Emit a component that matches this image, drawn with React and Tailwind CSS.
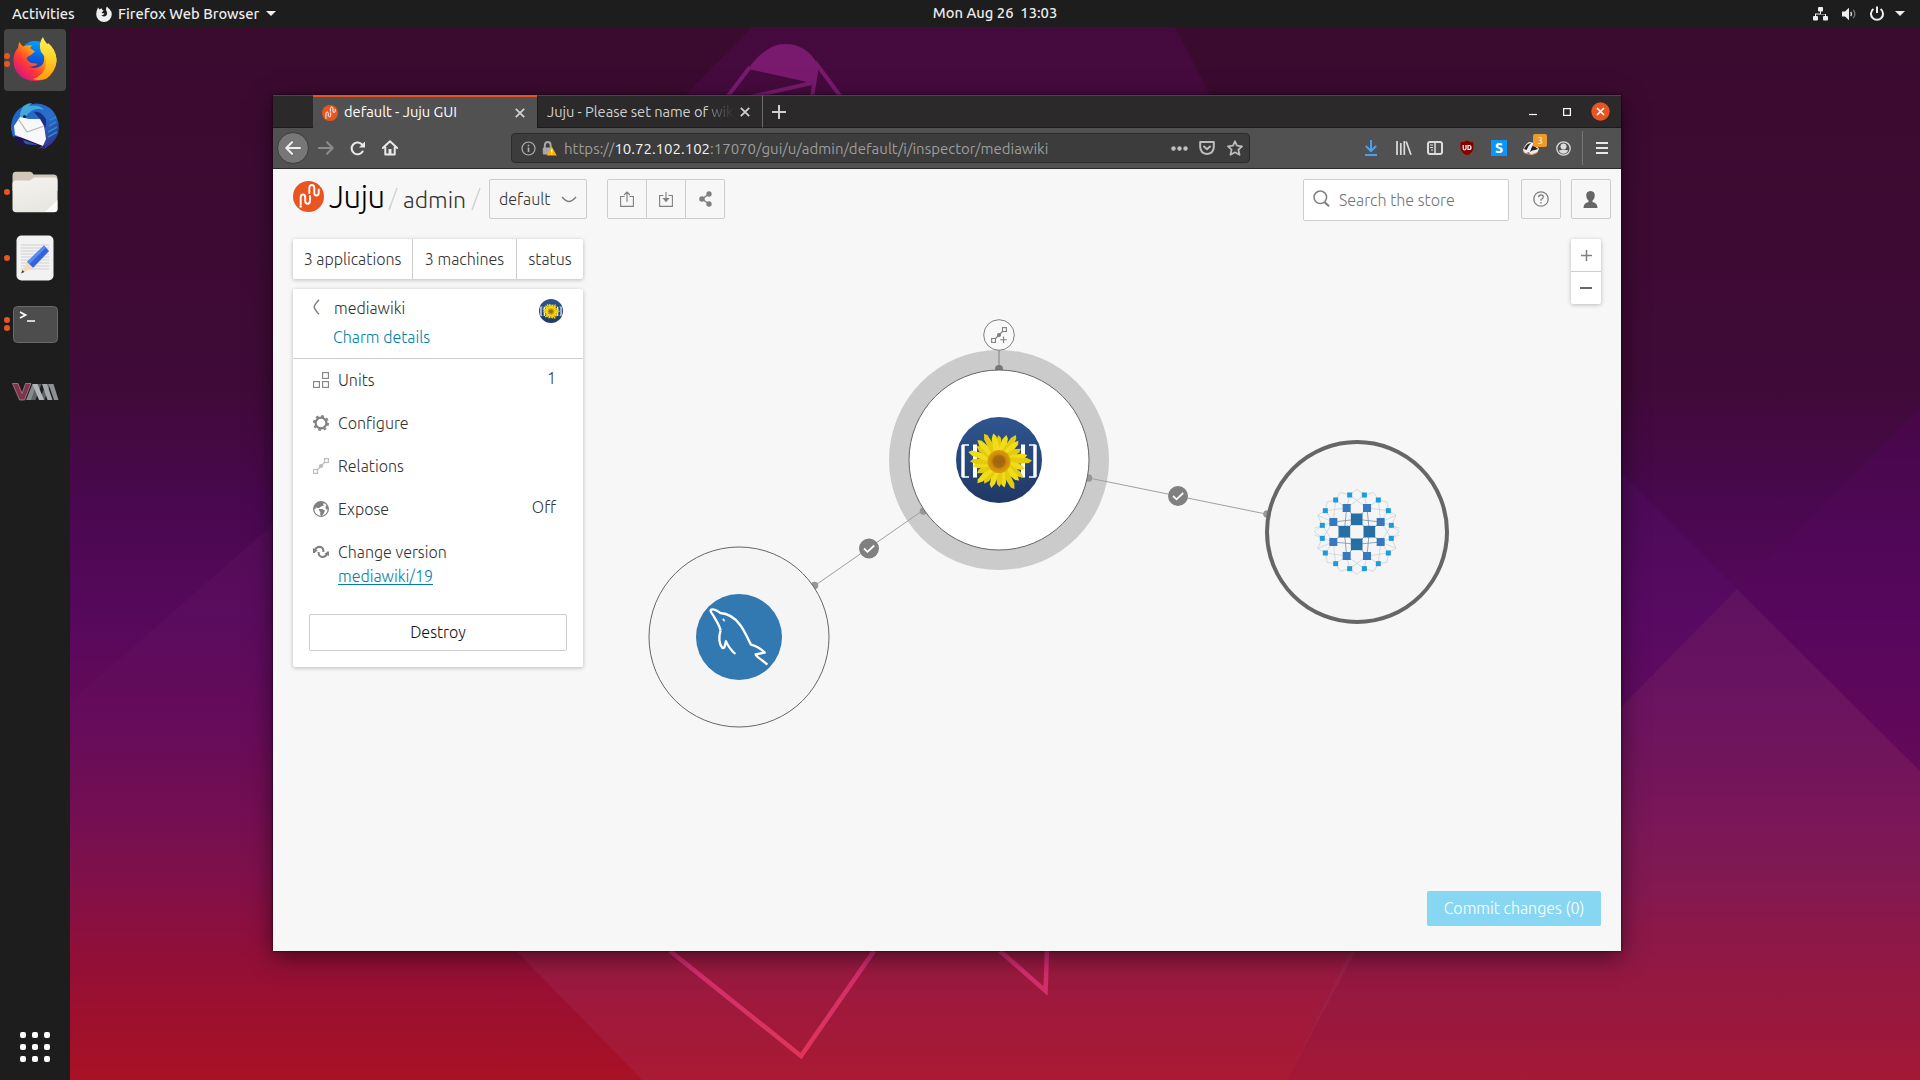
import React from "react";

/* ---------- wallpaper ---------- */
function Wallpaper() {
  return (
    <svg className="absolute inset-0" width="1920" height="1080" viewBox="0 0 1920 1080">
      <defs>
        <linearGradient id="sky" x1="0" y1="0" x2="0" y2="1">
          <stop offset="0" stopColor="#3b0a2e" />
          <stop offset="0.36" stopColor="#3f0a38" />
          <stop offset="0.47" stopColor="#4a0850" />
          <stop offset="0.57" stopColor="#57085c" />
          <stop offset="0.68" stopColor="#670a58" />
          <stop offset="0.8" stopColor="#7d104c" />
          <stop offset="0.9" stopColor="#950f35" />
          <stop offset="1" stopColor="#a91125" />
        </linearGradient>
        <linearGradient id="pink" x1="0" y1="951" x2="0" y2="1060" gradientUnits="userSpaceOnUse">
          <stop offset="0" stopColor="#cf2b72" />
          <stop offset="1" stopColor="#e0365a" />
        </linearGradient>
        <linearGradient id="facet" x1="0" y1="525" x2="0" y2="900" gradientUnits="userSpaceOnUse">
          <stop offset="0" stopColor="#6a1a66" stopOpacity=".25" />
          <stop offset="1" stopColor="#6a1a66" stopOpacity="0" />
        </linearGradient>
      </defs>
      <rect width="1920" height="1080" fill="url(#sky)" />
      <path d="M752 27H1175L1420 500H300L685 95Z" fill="#5a0c58" opacity=".35" />
      <path d="M1920 408L1737 589L1920 771Z" fill="#56055f" opacity=".35" />
      <path d="M1648 500L1737 589L1621 707V473Z" fill="#5a1070" opacity=".3" />
      <path d="M1737 589L1920 771V1080H1287L1400 850L1621 707Z" fill="#8a3a7a" opacity=".2" />
      <path d="M70 702L273 525V951H70Z" fill="url(#facet)" />
      <path d="M490 924L642 1080H1287L1370 924Z" fill="#b04070" opacity=".2" />
      <g fill="none" stroke="url(#pink)" strokeWidth="4.5" strokeLinejoin="miter">
        <path d="M670 951L801 1056L874 951" />
        <path d="M1000 951L1045.500 991L1047 951" />
      </g>
      <path d="M748 69Q766 44 785 44Q807 44 818 65L812 83Z" fill="#791a6e" />
      <g fill="none" stroke="#791a6e" strokeWidth="4">
        <path d="M728 96L750 67" />
        <path d="M750 97L812 83" />
        <path d="M812 97L817 66" />
        <path d="M815 62L841 97" />
      </g>
    </svg>
  );
}

/* ---------- desktop panel ---------- */
function Caret() {
  return (
    <svg width="10" height="5" viewBox="0 0 10 5">
      <path d="M0 0H10L5 5Z" fill="#eee" />
    </svg>
  );
}

function TopBar() {
  return (
    <header className="relative flex h-[27px] shrink-0 items-center bg-[#1d1d1d] pr-[15px] pl-3 font-['Ubuntu','Noto_Sans',sans-serif] text-[14.75px] leading-none font-medium text-[#ececec]">
      <span className="w-[84px] pt-[2px] whitespace-nowrap">Activities</span>
      <svg className="mr-[6px]" width="16" height="16" viewBox="0 0 16 16">
        <path d="M2 1.500L3.500 3.400Q5 2.200 6 2.600Q5.500 4 7.600 4.600Q6.600 6 5.600 6.600Q6 7.600 7.600 7.200Q8.800 7.200 8.300 8Q7 9.600 5.200 9Q6.600 11 9 10.300Q11.500 9.200 11 6.200Q9 3 11 0.400Q12 2 13.500 3Q15.800 5.500 15.800 8.300A7.800 7.600 0 0 1 .2 8.300Q.2 5 2 1.500Z" fill="#eee" />
      </svg>
      <span className="mr-[6px] w-[142px] pt-[2px] whitespace-nowrap">Firefox Web Browser</span>
      <Caret />
      <div className="absolute inset-x-0 flex justify-center pl-[70px]">
        <span className="whitespace-pre">Mon Aug 26  13:03</span>
      </div>
      <div className="ml-auto flex items-center">
        <svg className="mr-[14px]" width="15" height="14" viewBox="0 0 15 14" fill="#eee">
          <rect x="5" y="0" width="5" height="4.500" rx="1" />
          <rect x="0" y="9" width="5" height="4.500" rx="1" />
          <rect x="10" y="9" width="5" height="4.500" rx="1" />
          <path d="M7 4h1v3h5v2h-1V7.500H3V9H2V6.500h5z" />
        </svg>
        <svg className="mr-[13px]" width="15" height="14" viewBox="0 0 15 14">
          <path d="M0 4.500H3L7 .8V13.200L3 9.500H0Z" fill="#eee" />
          <path d="M8.800 4.800Q10.300 7 8.800 9.200" stroke="#ddd" strokeWidth="1.500" fill="none" />
          <path d="M11.300 2.800Q14.500 7 11.300 11.200" stroke="#777" strokeWidth="1.300" fill="none" />
        </svg>
        <svg className="mr-[11px]" width="14" height="15" viewBox="0 0 14 15" fill="none" stroke="#eee" strokeWidth="2">
          <path d="M3.400 3A6 6 0 1 0 10.600 3" />
          <path d="M7 0.500V7" />
        </svg>
        <Caret />
      </div>
    </header>
  );
}

function FirefoxIcon() {
  return (
    <svg width="46" height="46" viewBox="0 0 46 46">
      <defs>
        <linearGradient id="fxBody" x1=".9" y1=".1" x2=".1" y2=".9">
          <stop offset="0" stopColor="#fff44f" />
          <stop offset=".35" stopColor="#ffa40f" />
          <stop offset=".65" stopColor="#ff3b35" />
          <stop offset="1" stopColor="#d4108a" />
        </linearGradient>
        <linearGradient id="fxTail" x1="0" y1="0" x2="0" y2="1">
          <stop offset="0" stopColor="#fff14f" />
          <stop offset=".5" stopColor="#ffd02a" />
          <stop offset="1" stopColor="#ff9a0a" />
        </linearGradient>
        <linearGradient id="fxGlobe" x1=".6" y1="0" x2=".4" y2="1">
          <stop offset="0" stopColor="#00a2ff" />
          <stop offset=".5" stopColor="#0a62e0" />
          <stop offset="1" stopColor="#312a98" />
        </linearGradient>
      </defs>
      <circle cx="23" cy="20" r="16" fill="url(#fxGlobe)" />
      <path d="M7 5L11 9.500Q16 7.500 20 8.500L18 11L23 14.500L19 18Q14 20 15 22Q16 25 20 26L26 27Q20 31 16 29Q22 33 29 29Q34 25 31 15L36 6Q44 12 44.500 23Q44 36 33 42Q23 46 13 42Q1 36 1.500 22Q2 15 6 11Z" fill="url(#fxBody)" />
      <path d="M31 0Q33 6 39 10Q45 17 44.500 25Q42 36 34 42Q25 44 21 42Q33 38 34 26Q34 20 29 15Q26 6 31 0Z" fill="url(#fxTail)" />
    </svg>
  );
}

function ThunderbirdIcon() {
  return (
    <svg className="mt-[2px]" width="50" height="50" viewBox="0 0 50 50">
      <defs>
        <linearGradient id="tb" x1=".1" y1=".1" x2=".8" y2="1">
          <stop offset="0" stopColor="#1d63c4" />
          <stop offset=".5" stopColor="#2a6fca" />
          <stop offset="1" stopColor="#342c87" />
        </linearGradient>
      </defs>
      <path d="M1 27Q1 10 14 4Q32 -3 43 9Q51 20 48 32Q43 44 31 48L35 45L28 47L34 42Q16 46 3 35Z" fill="url(#tb)" />
      <path d="M3 34L12 47L11 42L17 45L13 38L35 45L30 38Z" fill="#211449" />
      <path d="M10 12Q12 1 22 1L19 4Q30 2 34 8Q22 4 15 16L10 21Z" fill="#41a7dd" />
      <path d="M24 10Q30 8 36 17Q37 22 35 27L30 17Z" fill="#1c2f86" />
      <path d="M40 18L46 15M39 24L46 20M38 30L47 25M38 35L47 30" stroke="#1f8fd0" strokeWidth="1.600" />
      <path d="M10 15L4 24L5 33L33 44L36 37L34 24L30 17H19Z" fill="#f8f8fa" />
      <path d="M9 18L17 30L34 24" fill="none" stroke="#b8b8bb" strokeWidth="1.200" />
      <circle cx="14.500" cy="14.500" r="1.600" fill="#10204a" />
    </svg>
  );
}

function FolderIcon() {
  return (
    <svg width="46" height="42" viewBox="0 0 46 42">
      <defs>
        <linearGradient id="fold" x1="0" y1="0" x2=".3" y2="1">
          <stop offset="0" stopColor="#f4f3ef" />
          <stop offset="1" stopColor="#e9e7e1" />
        </linearGradient>
      </defs>
      <path d="M.5 5Q.5 .8 4 .8H18Q20.500 1 21.500 3.500H42Q45.500 3.800 45.500 8V20H.5Z" fill="#cfc8b8" />
      <path d="M.5 13Q.5 9.500 4 9.500H18L22 6.500H42Q45.500 6.500 45.500 10V38Q45.500 41.200 42 41.200H4Q.5 41 .5 38Z" fill="url(#fold)" />
      <path d="M45.500 29V38Q45.500 41 42 41H33Z" fill="#fff" opacity=".8" />
    </svg>
  );
}

function WriterIcon() {
  return (
    <svg width="38" height="46" viewBox="0 0 38 46">
      <rect x=".5" y=".5" width="37" height="45" rx="5" fill="#f2f2f2" />
      <path d="M5 10H33M5 13H33M5 16H33M5 19H33M5 22H33M5 25H33M5 28H33M5 31H33M5 34H33" stroke="#d0d0d0" strokeWidth="1" />
      <path d="M28 10.500L33 16L17 33L11 27Z" fill="#3264dc" />
      <path d="M28 10.500L30 12.500L13 29.500L11 27Z" fill="#5c8af2" />
      <path d="M11 27L17 33L6 38Z" fill="#f8d9b8" />
      <path d="M6.500 35L8.500 37L5 38.500Z" fill="#444" />
    </svg>
  );
}

function TerminalIcon() {
  return (
    <svg width="45" height="37" viewBox="0 0 45 37">
      <rect x=".5" y=".5" width="44" height="36" rx="4" fill="#4d4d4d" stroke="#6a6a6a" />
      <path d="M7 6L12.500 9L7 12" fill="none" stroke="#fff" strokeWidth="1.800" />
      <path d="M14 15H22" stroke="#fff" strokeWidth="1.500" />
    </svg>
  );
}

function VmmIcon() {
  return (
    <svg className="mt-1" width="47" height="18" viewBox="0 0 46 18">
      <path d="M0 .5H5.500L9.500 10.500L13 .5H18.500L12 17H7Z" fill="#80334a" stroke="#b9a9ae" strokeWidth=".6" />
      <path d="M18 17L24.500 1H29L23 17ZM27 17L33.500 1H38L32 17Z" fill="#5e6367" />
      <path d="M13.500 17L20 1H24.500L18.500 17Z" fill="#868b8f" />
      <path d="M20 1H25L31.500 17H26.500Z" fill="#b3b7b9" />
      <path d="M29.500 1H34.500L40 17H35Z" fill="#a5a9ac" />
      <path d="M36 1H41L46 17H41.500Z" fill="#8c9194" />
    </svg>
  );
}

function DockItem({ dots = 0, active = false, children }) {
  return (
    <div className={"relative flex h-[62px] w-[62px] items-center justify-center rounded-[4px] " + (active ? "bg-[#464646]" : "")}>
      <div className="absolute inset-y-0 left-0 flex flex-col justify-center gap-[2px]">
        {Array.from({ length: dots }, (_, i) => (
          <span key={i} className="h-[6px] w-[6px] rounded-full bg-[#e95420]" />
        ))}
      </div>
      {children}
    </div>
  );
}

function Dock() {
  return (
    <nav className="relative flex w-[70px] flex-col items-center gap-1 bg-[#1d1d1d] pt-[2px]">
      <DockItem dots={2} active><FirefoxIcon /></DockItem>
      <DockItem><ThunderbirdIcon /></DockItem>
      <DockItem dots={1}><FolderIcon /></DockItem>
      <DockItem dots={1}><WriterIcon /></DockItem>
      <DockItem dots={2}><TerminalIcon /></DockItem>
      <DockItem><VmmIcon /></DockItem>
      <div className="mt-auto mb-[18px] grid grid-cols-3 gap-[6px]">
        {Array.from({ length: 9 }, (_, i) => (
          <span key={i} className="h-[6px] w-[6px] rounded-[2px] bg-white" />
        ))}
      </div>
    </nav>
  );
}

/* ---------- Juju marks ---------- */
function JujuMark({ size }) {
  return (
    <svg width={size} height={size} viewBox="0 0 31 31">
      <circle cx="15.500" cy="15.500" r="15.500" fill="#e95420" />
      <g fill="none" stroke="#fff" strokeWidth="1.900" strokeLinecap="round">
        <path d="M7.700 23.500V16.500Q7.700 13.500 9.900 13.500Q12.200 13.500 12.200 16.500V20Q12.200 22.700 14.700 22.700Q17 22.700 17 20V15" />
        <path d="M16.300 12V7Q16.300 4 18.800 4Q21.300 4 21.300 7V12Q21.300 14.500 23.500 14.500Q25.700 14.500 25.700 12V8.500" />
      </g>
      <circle cx="7.700" cy="25.500" r="1.200" fill="#fff" />
    </svg>
  );
}

function CloseX() {
  return (
    <svg className="shrink-0" width="10" height="10" viewBox="0 0 10 10" stroke="#cfcfcf" strokeWidth="1.800">
      <path d="M.8 .8L9.200 9.200M9.200 .8L.8 9.200" />
    </svg>
  );
}

/* ---------- browser chrome ---------- */
function TabStrip() {
  return (
    <div className="flex h-[33px] shrink-0 rounded-t-[4px] bg-[#2b292a] text-[14.67px] leading-[20px] text-[#e6e6e6]">
      <div className="w-[40px] border-t border-b border-t-[#474546] border-b-[#1b1b1b]" />
      <div className="flex w-[224px] items-center border-t-2 border-[#e95420] bg-[#515151] pr-[12px] pl-[9px]">
        <JujuMark size={16} />
        <span className="ml-[6px] grow pb-[2px] whitespace-nowrap text-white">default - Juju GUI</span>
        <CloseX />
      </div>
      <div className="flex w-[226px] items-center border-t border-r border-b border-l border-t-[#474546] border-r-[#6a6a6a] border-b-[#1b1b1b] border-l-[#1b1b1b] pr-[12px] pl-[9px] text-[#cfcfcf]">
        <span className="w-[193px] shrink-0 whitespace-nowrap tracking-[-0.05px]">
          Juju - Please set name of <span className="bg-gradient-to-r from-[#888] to-[#333] bg-clip-text text-transparent">wik</span>
        </span>
        <CloseX />
      </div>
      <div className="flex grow items-center border-t border-b border-t-[#474546] border-b-[#1b1b1b] pr-[11px] pl-[9px]">
        <svg width="14" height="14" viewBox="0 0 14 14" stroke="#d0d0d0" strokeWidth="2">
          <path d="M7 0V14M0 7H14" />
        </svg>
        <div className="ml-auto flex items-center">
          <svg className="mt-px mr-[26px]" width="8" height="8" viewBox="0 0 8 8"><path d="M0 6.500H8" stroke="#fff" strokeWidth="1.200" /></svg>
          <svg className="mr-[20px]" width="8" height="8" viewBox="0 0 8 8"><rect x=".6" y=".6" width="6.800" height="6.800" fill="none" stroke="#fff" strokeWidth="1.200" /></svg>
          <svg width="19" height="19" viewBox="0 0 19 19">
            <circle cx="9.500" cy="9.500" r="9.200" fill="#e95420" />
            <path d="M6 6L13 13M13 6L6 13" stroke="#fff" strokeWidth="1.600" />
          </svg>
        </div>
      </div>
    </div>
  );
}

function UrlBar() {
  return (
    <div className="ml-[113px] flex h-[30px] w-[739px] items-center rounded-[4px] border border-[#2b2b2b] bg-[#3c3c3c] pr-[6px] pl-[9px] text-[15px] leading-[20px] text-[#9d9d9d]">
      <svg className="mr-[6px]" width="15" height="15" viewBox="0 0 15 15" fill="none" stroke="#b0b0b0">
        <circle cx="7.500" cy="7.500" r="6.500" strokeWidth="1.200" />
        <path d="M7.500 6.500V11M7.500 3.800V5.300" strokeWidth="1.600" />
      </svg>
      <svg className="mr-[7px]" width="15" height="15" viewBox="0 0 15 15">
        <path d="M2.800 8V4.500Q2.800 1 5.800 1Q8.700 1 8.700 4.500V7" fill="none" stroke="#a8a8a8" strokeWidth="1.900" />
        <rect x=".8" y="6.500" width="9.500" height="7" rx="1" fill="#a8a8a8" />
        <path d="M9.700 5.500L14.800 14.500H4.700Z" fill="#ffb000" />
        <path d="M9.700 8.300V11.500M9.700 12.400V13.600" stroke="#fff" strokeWidth="1.300" />
      </svg>
      <span className="mt-px grow whitespace-nowrap">https://<span className="text-[#f4f4f4]">10.72.102.102</span>:17070/gui/u/admin/default/i/inspector/mediawiki</span>
      <svg className="mr-[11px]" width="17" height="5" viewBox="0 0 17 5" fill="#c0c0c0">
        <circle cx="2.500" cy="2.500" r="2.200" /><circle cx="8.500" cy="2.500" r="2.200" /><circle cx="14.500" cy="2.500" r="2.200" />
      </svg>
      <svg className="mr-[12px]" width="16" height="14" viewBox="0 0 16 14" fill="none" stroke="#bdbdbd" strokeWidth="2" strokeLinejoin="round" strokeLinecap="round">
        <path d="M1.200 1H14.800V6Q14.500 12.500 8 13Q1.500 12.500 1.200 6Z" /><path d="M5 5.500L8 8.300L11 5.500" />
      </svg>
      <svg width="16" height="16" viewBox="0 0 16 16" fill="none" stroke="#bdbdbd" strokeWidth="1.800" strokeLinejoin="round">
        <path d="M8 1.300L10 5.700L15 6.300L11.400 9.600L12.500 14.800L8 12.300L3.500 14.800L4.600 9.600L1 6.300L6 5.700Z" />
      </svg>
    </div>
  );
}

function NavBar() {
  return (
    <div className="flex h-[41px] shrink-0 items-center border-b border-[#2a2a2a] bg-[#515151] pl-1">
      <div className="flex h-8 w-8 items-center justify-center rounded-full border border-[#3b3b3b] bg-[#777]">
        <svg width="16" height="14" viewBox="0 0 16 14" fill="none" stroke="#f0f0f0" strokeWidth="2" strokeLinecap="round" strokeLinejoin="round"><path d="M15 7H1.500M7 1.200L1.300 7L7 12.800" /></svg>
      </div>
      <svg className="ml-[9px]" width="16" height="14" viewBox="0 0 16 14" fill="none" stroke="#8c8c8c" strokeWidth="2" strokeLinecap="round" strokeLinejoin="round"><path d="M1 7H14.500M9 1.200L14.700 7L9 12.800" /></svg>
      <svg className="ml-[16px]" width="16" height="15" viewBox="0 0 16 15" fill="none" stroke="#e8e8e8" strokeWidth="2.100" strokeLinecap="round"><path d="M12.600 10.500A5.900 5.900 0 1 1 11.500 3L13 4.500" /><path d="M15 .5V6.500H9Z" fill="#e8e8e8" stroke="none" /></svg>
      <svg className="ml-[16px]" width="16" height="16" viewBox="0 0 16 16"><path d="M.8 8L8 1.200L15.200 8M3.300 7.500V14.500H12.700V7.500" fill="none" stroke="#e8e8e8" strokeWidth="2" strokeLinejoin="round" strokeLinecap="round" /><rect x="6.500" y="9" width="3" height="6" fill="#e8e8e8" /></svg>
      <UrlBar />
      <div className="ml-auto flex items-center">
        <svg className="mr-[18px]" width="14" height="16" viewBox="0 0 14 16" fill="none" stroke="#4a9ff5" strokeWidth="2"><path d="M7 0V11M1.800 6L7 11L12.200 6M1 15H13" /></svg>
        <svg className="mr-[15px]" width="16" height="14" viewBox="0 0 16 14" stroke="#dcdcdc" strokeWidth="1.700"><path d="M1 0V14M4.800 2V14M8.300 0V14M10.200 .5L15 13.700" /></svg>
        <svg className="mr-[17px]" width="16" height="14" viewBox="0 0 16 14" fill="none" stroke="#dcdcdc"><rect x="1" y="1" width="14" height="12" rx="2" strokeWidth="2" /><path d="M8 1V13" strokeWidth="1.500" /><path d="M3 4H6M3 6.500H6M4 9H6" strokeWidth="1" /></svg>
        <svg className="mr-[17px]" width="14" height="16" viewBox="0 0 14 16"><path d="M7 0Q10 2 13.800 2V8Q13.500 13 7 15.800Q.5 13 .2 8V2Q4 2 7 0Z" fill="#800000" stroke="#9c4848" strokeWidth=".5" /><path d="M3.200 5V8.500Q3.200 10 4.600 10Q6 10 6 8.500V5M8 5.500H9Q11 5.500 11 7.500Q11 9.500 9 9.500H8Z" fill="none" stroke="#fff" strokeWidth="1.200" /></svg>
        <span className="mr-[16px] flex h-4 w-4 items-center justify-center bg-[#0996f8] text-[14px] leading-none font-black text-white">S</span>
        <div className="relative mr-[17px] h-4 w-4">
          <svg width="16" height="16" viewBox="0 0 16 16"><path d="M0 10Q2 4 6 2Q13 2 16 9L14 13L9 15L1 13Z" fill="#eee" /><path d="M1 9Q4 3 8 3Q5 6 3.500 10ZM10 5L15 9L12 10Q9 10 7 12Q8 8 10 5ZM4 12L7 13L6 14Z" fill="#222" /><path d="M0 11L3 13.500L9 14.500L14 12.500" fill="none" stroke="#d9854a" strokeWidth=".8" /></svg>
          <span className="absolute -top-[6px] left-[10px] flex h-[13px] w-[14px] items-center justify-center rounded-[2px] bg-[#ee9a2a] text-[10px] leading-none text-white">3</span>
        </div>
        <svg width="15" height="15" viewBox="0 0 15 15"><circle cx="7.500" cy="7.500" r="6.700" fill="none" stroke="#dcdcdc" strokeWidth="1.300" /><circle cx="7.500" cy="5.500" r="3" fill="#dcdcdc" /><path d="M2.800 9.500Q7.500 8 12.200 9.500Q10.500 12.800 7.500 12.800Q4.500 12.800 2.800 9.500Z" fill="#dcdcdc" /></svg>
        <div className="mr-[13px] ml-[11px] h-[34px] w-px bg-[#757575]" />
        <svg className="mr-[13px]" width="12" height="12" viewBox="0 0 12 12" stroke="#e8e8e8" strokeWidth="2"><path d="M0 1H12M0 6H12M0 11H12" /></svg>
      </div>
    </div>
  );
}

/* ---------- Juju GUI ---------- */
function Slash() {
  return (
    <svg width="10" height="24" viewBox="0 0 10 24"><path d="M9 1L1 23" stroke="#d2d2d2" strokeWidth="1.500" /></svg>
  );
}

function GuiHeader() {
  return (
    <div className="flex h-[52px] items-start pt-[10px] pr-[10px] pl-5">
      <div className="mt-[2px]"><JujuMark size={31} /></div>
      <span className="mt-[2px] ml-[5px] w-[57px] text-[31px] leading-[32px] font-light tracking-[-0.4px] text-black">Juju</span>
      <div className="mt-2 ml-[2px]"><Slash /></div>
      <span className="mt-[7px] ml-[5px] w-[68px] text-[23px] leading-[28px] font-light">admin</span>
      <div className="mt-2"><Slash /></div>
      <button className="ml-2 flex h-10 w-[98px] items-center justify-between rounded-[2px] border border-[#cdcdcd] pr-[9px] pl-[9px] font-light">
        default
        <svg width="16" height="7" viewBox="0 0 16 7"><path d="M1 1Q5 5.500 8 5.500Q11 5.500 15 1" fill="none" stroke="#7d7d7d" strokeWidth="1.400" /></svg>
      </button>
      <div className="ml-5 flex h-10 w-[118px] divide-x divide-[#cdcdcd] rounded-[2px] border border-[#cdcdcd]">
        <div className="flex flex-1 items-center justify-center">
          <svg width="14" height="16" viewBox="0 0 14 16" fill="none" stroke="#808080" strokeWidth="1.100"><path d="M4.500 5.500H.6V15.400H13.400V5.500H9.500M7 11V1M4 4L7 1L10 4" /></svg>
        </div>
        <div className="flex flex-1 items-center justify-center">
          <svg width="14" height="16" viewBox="0 0 14 16" fill="none" stroke="#808080" strokeWidth="1.100"><path d="M4.500 4.500H.6V15.400H13.400V4.500H9.500M7 1V10" /><path d="M4.500 7.500L7 10.500L9.500 7.500Z" fill="#808080" /></svg>
        </div>
        <div className="flex flex-1 items-center justify-center">
          <svg width="13" height="16" viewBox="0 0 13 16" fill="#808080"><circle cx="3" cy="8" r="2.800" /><circle cx="10" cy="3" r="2.700" /><circle cx="10" cy="13" r="2.700" /><path d="M10 3L3 8L10 13" fill="none" stroke="#808080" strokeWidth="1.500" /></svg>
        </div>
      </div>
      <div className="ml-auto flex h-[42px] w-[206px] items-center rounded-[2px] border border-[#cdcdcd] bg-white pl-[9px] font-light text-[#757575]">
        <svg className="mr-[9px] -mt-1" width="17" height="17" viewBox="0 0 17 17" fill="none" stroke="#808080" strokeWidth="1.500"><circle cx="7.300" cy="7.300" r="6.300" /><path d="M11.500 12L16 16.300" strokeWidth="2" /></svg>
        <span>Search the store</span>
      </div>
      <div className="ml-3 flex h-10 w-10 items-center justify-center rounded-[2px] border border-[#cdcdcd]">
        <svg width="16" height="16" viewBox="0 0 16 16" fill="none" stroke="#808080" strokeWidth="1.300"><circle cx="8" cy="8" r="7.200" /><path d="M5.700 6.200Q5.700 4 8 4Q10.300 4 10.300 6Q10.300 7.500 8 8.500V9.700M8 11V12.500" /></svg>
      </div>
      <div className="ml-[10px] flex h-10 w-10 items-center justify-center rounded-[2px] border border-[#cdcdcd]">
        <svg width="16" height="17" viewBox="0 0 16 17" fill="#666"><path d="M7.500 0Q12 .2 11.800 5Q11.500 8 9.500 9.500V11Q14.500 12 14.500 17H.5Q.5 12 5.500 11V9.500Q3.500 8 3.200 5Q3 .2 7.500 0Z" /></svg>
      </div>
    </div>
  );
}

const rows = [
  {
    label: "Units",
    value: "1",
    right: "pr-[27px]",
    icon: <g fill="none" stroke="#808080" strokeWidth="1.100"><rect x="9.600" y=".6" width="5.800" height="5.800" /><rect x=".6" y="9.600" width="5.800" height="5.800" /><rect x="9.600" y="9.600" width="5.800" height="5.800" /></g>,
  },
  {
    label: "Configure",
    right: "pr-7",
    icon: <g fill="none" stroke="#808080"><circle cx="8" cy="8" r="5.400" strokeWidth="2.200" /><circle cx="8" cy="8" r="7.100" strokeWidth="1.800" strokeDasharray="2.800 2.777" /></g>,
  },
  {
    label: "Relations",
    right: "pr-7",
    icon: <g fill="none" stroke="#b8bdbd" strokeWidth="1.200"><rect x=".6" y="11.500" width="3.900" height="3.900" /><rect x="11.500" y=".6" width="3.900" height="3.900" /><path d="M4.500 11.500L11.500 4.500" /><circle cx="8" cy="8" r="1.500" fill="#b8bdbd" /></g>,
  },
  {
    label: "Expose",
    value: "Off",
    right: "pr-[27px]",
    icon: <g><circle cx="8" cy="8" r="7.300" fill="#fff" stroke="#808080" strokeWidth="1.300" /><path d="M1 6Q2 2 7 .8L12 1.500L10 3L11 4.500L8 5.500L6 7H4L3 6L2.500 8L.8 8ZM6 8H9L12 9.500L11 12L8.500 15.500L7 13L7.500 11L6 9.500ZM13 4L15.300 7L14 9L12.500 7Z" fill="#808080" /></g>,
  },
];

function InspectorRow({ row }) {
  return (
    <div className={"flex h-[43px] items-center pl-5 " + row.right}>
      <svg className="mt-px mr-[9px]" width="16" height="16" viewBox="0 0 16 16">{row.icon}</svg>
      <span className="grow">{row.label}</span>
      {row.value && <span className="-mt-[3px]">{row.value}</span>}
    </div>
  );
}

function Inspector() {
  return (
    <div className="mt-[10px] h-[378px] w-[290px] rounded-[2px] bg-white shadow-[0_1px_4px_rgba(0,0,0,0.25)]">
      <div className="flex h-[70px] border-b border-[#cdcdcd] pt-[7px] pr-5 pl-5">
        <svg className="mt-[3px]" width="7" height="16" viewBox="0 0 7 16"><path d="M6 .7Q1.200 6 1.200 8Q1.200 10 6 15.300" fill="none" stroke="#808080" strokeWidth="1.500" /></svg>
        <div className="ml-[14px] grow">
          <div className="leading-[24px]">mediawiki</div>
          <div className="mt-[5px] -ml-px leading-[24px] text-[#007fa8]">Charm details</div>
        </div>
        <div className="mt-[3px]"><MediawikiIcon size={24} /></div>
      </div>
      <div className="-mt-px">
        {rows.map((row) => <InspectorRow key={row.label} row={row} />)}
      </div>
      <div className="flex h-[79px] pt-[10px] pl-5">
        <svg className="mt-[5px] mr-[9px]" width="16" height="14" viewBox="0 0 16 14" fill="none" stroke="#808080" strokeWidth="2"><path d="M2 5Q3.500 1.800 6.500 1.800Q10.500 2 10.500 7" /><path d="M5.500 7Q5.700 11.800 9.500 12Q12.500 12 14 9" /><path d="M0 3V8H2Q2.500 6 5 6ZM16 11V6.500H14Q13.500 8.500 11 8.500Z" fill="#808080" stroke="none" /></svg>
        <div className="leading-[24px]">
          <div>Change version</div>
          <div className="inline-block h-[21px] border-b border-[#007fa8] text-[#007fa8]">mediawiki/19</div>
        </div>
      </div>
      <button className="mx-4 mt-[5px] block h-[37px] w-[258px] rounded-[2px] border border-[#cdcdcd] pb-[2px] font-light text-[#111]">Destroy</button>
    </div>
  );
}

/* ---------- canvas nodes ---------- */
const petalLengths = [15, 16, 20, 17, 14, 18, 22, 16, 18, 17, 21, 16, 15, 17, 16, 20, 14, 16, 18, 21, 16, 19, 20, 17];

function MediawikiIcon({ size }) {
  return (
    <svg width={size} height={size} viewBox="0 0 86 86">
      <defs>
        <linearGradient id="mw" x1="0" y1="0" x2="0" y2="1">
          <stop offset="0" stopColor="#2f5590" />
          <stop offset="1" stopColor="#203864" />
        </linearGradient>
        <radialGradient id="disc">
          <stop offset="0" stopColor="#9c650f" />
          <stop offset=".5" stopColor="#a96c0e" />
          <stop offset=".62" stopColor="#cc860c" />
          <stop offset="1" stopColor="#dba00c" />
        </radialGradient>
      </defs>
      <circle cx="43" cy="43" r="43" fill="url(#mw)" />
      <g fill="none" stroke="#fff">
        <path d="M13 28H7V60H13M73 28H79V60H73" strokeWidth="1.600" />
        <path d="M7 28V60M79 28V60" strokeWidth="3.400" />
        <path d="M19 27.500V60.500M67 27.500V60.500" strokeWidth="4" />
      </g>
      <circle cx="43" cy="44" r="19" fill="#e6cc0c" />
      {petalLengths.map((length, i) => (
        <path
          key={i}
          d={`M39.500 34L40 ${38 - length}L42.500 ${33 - length}L45 ${36 - length}L46.500 34Z`}
          transform={`rotate(${i * 15 + (i % 3) * 2} 43 44)`}
          fill={i % 2 ? "#f0dc18" : "#e4cb0c"}
        />
      ))}
      <circle cx="43" cy="44.500" r="11.500" fill="url(#disc)" />
    </svg>
  );
}

const haproxySmall = [[329,225],[373,225],[287,240],[415,240],[256,272],[445,272],[247,316],[454,316],[247,355],[454,355],[256,399],[445,399],[287,431],[415,431],[329,446],[373,446]];
const haproxyMedium = [[320,264],[381,264],[280,306],[422,306],[280,366],[422,366],[320,408],[381,408]];
const haproxyLarge = [[350,298],[313,335],[388,335],[350,373]];

function HaproxyIcon() {
  return (
    <g transform="translate(967 251) scale(.33333)">
      <g fill="none" stroke="#c3cbd3" strokeWidth="2">
        <path d="M329 225L350 208L373 225L401 217L415 240L441 246L445 272L468 286L454 316L478 335L454 355L468 385L445 399L441 427L415 431L401 454L373 446L350 463L329 446L301 454L287 431L261 427L256 399L233 385L247 355L223 335L247 316L233 286L256 272L261 246L287 240L301 217Z" />
        <path d="M320 264L329 225L381 264L415 240L422 306L454 316L422 366L445 399L381 408L373 446L320 408L287 431L280 366L247 355L280 306L256 272L320 264L287 240L280 306L247 316L280 366L256 399L320 408L329 446L381 408L415 431L422 366L454 355L422 306L445 272L381 264L373 225Z" />
        <path d="M233 286L280 306M233 385L280 366M468 286L422 306M468 385L422 366M223 345L247 355M223 325L247 316M478 345L454 355M478 325L454 316" />
      </g>
      <g fill="none" stroke="#7f91ab" strokeWidth="2.500">
        <path d="M320 264L313 335L320 408M381 264L388 335L381 408M280 306L350 298L422 306M280 366L350 373L422 366M320 264L350 298L381 264M280 306L313 335L280 366M422 306L388 335L422 366M320 408L350 373L381 408M313 335L350 298L388 335L350 373Z" />
      </g>
      {haproxyLarge.map(([x, y]) => <rect key={x + "-" + y} x={x - 17.5} y={y - 17.5} width="35" height="35" fill="#256ea6" />)}
      {haproxyMedium.map(([x, y]) => <rect key={x + "-" + y} x={x - 12} y={y - 12} width="24" height="24" fill="#3579c3" />)}
      {haproxySmall.map(([x, y]) => <rect key={x + "-" + y} x={x - 7.5} y={y - 7.5} width="15" height="15" fill="#1b9cdb" />)}
    </g>
  );
}

function CheckBadge({ x, y }) {
  return (
    <g transform={`translate(${x} ${y})`}>
      <circle r="10" fill="#808080" />
      <path d="M-5 0L-1.500 3.300L5.200 -3" fill="none" stroke="#fff" strokeWidth="1.800" />
    </g>
  );
}

function Topology() {
  return (
    <svg className="absolute inset-0" width="1348" height="782" viewBox="0 0 1348 782">
      <circle cx="726" cy="291" r="110" fill="#cbcbcb" />
      <g stroke="#a0a0a0" strokeWidth="1">
        <path d="M542 416.500L649 342M816 309L993 345" />
        <path d="M726 181V199" stroke="#808080" />
      </g>
      <g fill="#979797">
        <circle cx="541.500" cy="416.500" r="3.800" /><circle cx="650.500" cy="342" r="3.800" />
        <circle cx="815.500" cy="309" r="3.800" /><circle cx="994" cy="345" r="3.800" />
        <circle cx="726" cy="200" r="4" fill="#777" />
      </g>
      <CheckBadge x={596} y={379.500} />
      <CheckBadge x={905} y={327} />
      <circle cx="726" cy="166" r="15.300" fill="#f9f9f9" stroke="#808080" />
      <g fill="none" stroke="#808080" strokeWidth="1.100" transform="translate(718 158)">
        <rect x=".6" y="11.500" width="3.900" height="3.900" /><rect x="11.500" y=".6" width="3.900" height="3.900" />
        <path d="M4.500 11.500L11.500 4.500M12.500 9.500V16M9.200 12.800H15.800" /><circle cx="8" cy="8" r="1.500" fill="#808080" />
      </g>
      <circle cx="726" cy="291" r="90" fill="#fff" stroke="#666" />
      <g transform="translate(683 248)"><MediawikiIcon size={86} /></g>
      <circle cx="466" cy="468" r="90" fill="#f5f5f5" stroke="#666" />
      <circle cx="466" cy="468" r="43" fill="#3279b1" />
      <g transform="translate(367 131) scale(.33333)" fill="none" stroke="#fff" strokeWidth="7" strokeLinejoin="round">
        <path d="M242 991C238 975 228 960 220 947C210 933 209 929 217 928C227 927 234 934 241 939C262 940 283 952 300 974C316 995 322 1015 333 1034C347 1038 363 1046 374 1058L347 1063C350 1072 366 1079 382 1094" />
        <path d="M242 991C235 1010 237 1033 247 1044C256 1047 254 1032 258 1024C265 1041 275 1052 286 1062" />
        <path d="M248 957Q254 960 251 964" strokeWidth="5" />
      </g>
      <circle cx="1084" cy="363" r="90" fill="#f5f5f5" stroke="#666" strokeWidth="4" />
      <HaproxyIcon />
    </svg>
  );
}

function JujuGui() {
  return (
    <main className="relative flex h-[782px] flex-col bg-[#f7f7f7] text-[16px] leading-none font-light text-[#333]">
      <Topology />
      <div className="relative"><GuiHeader /></div>
      <div className="relative flex grow justify-between pt-[18px] pr-5 pl-5">
        <div>
          <div className="flex h-10 w-[290px] divide-x divide-[#cdcdcd] rounded-[2px] bg-white text-center leading-[40px] shadow-[0_1px_4px_rgba(0,0,0,0.25)]">
            <div className="w-[120px]">3 applications</div>
            <div className="w-[104px]">3 machines</div>
            <div className="grow">status</div>
          </div>
          <Inspector />
        </div>
        <div className="flex flex-col items-end">
          <div className="flex h-[65px] w-[30px] flex-col divide-y divide-[#cdcdcd] rounded-[2px] bg-white shadow-[0_1px_4px_rgba(0,0,0,0.25)]">
            <div className="flex flex-1 items-center justify-center">
              <svg width="11" height="11" viewBox="0 0 11 11" stroke="#808080" strokeWidth="1.500"><path d="M5.500 0V11M0 5.500H11" /></svg>
            </div>
            <div className="flex flex-1 items-center justify-center">
              <svg width="12" height="2" viewBox="0 0 12 2"><path d="M0 1H12" stroke="#666" strokeWidth="2" /></svg>
            </div>
          </div>
          <button className="mt-auto mb-[25px] h-[35px] w-[174px] rounded-[2px] bg-[#88d7f2] pb-[2px] text-white">Commit changes (0)</button>
        </div>
      </div>
    </main>
  );
}

export default function App() {
  return (
    <div className="relative flex h-[1080px] w-[1920px] flex-col overflow-hidden font-['Ubuntu','Open_Sans',sans-serif]">
      <Wallpaper />
      <TopBar />
      <div className="relative flex grow">
        <Dock />
      </div>
      <section className="absolute top-[95px] left-[273px] w-[1348px] shadow-[0_0_2px_rgba(0,0,0,0.8),0_6px_22px_rgba(0,0,0,0.5)]">
        <TabStrip />
        <NavBar />
        <JujuGui />
      </section>
    </div>
  );
}
